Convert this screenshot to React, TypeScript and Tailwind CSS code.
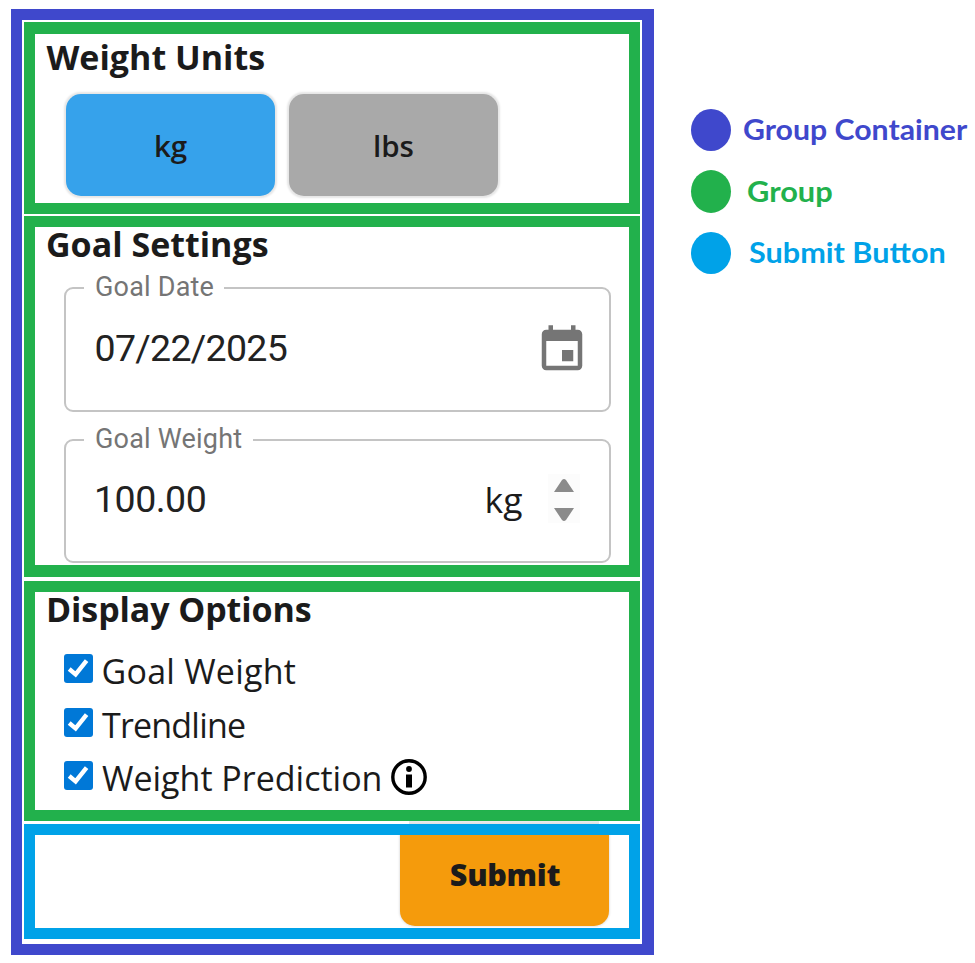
import type { ReactNode } from "react";

function Frame({ className, children }: { className: string; children?: ReactNode }) {
  return <section className={`bg-white ${className}`}>{children}</section>;
}

function UnitButton({ className, label }: { className: string; label: string }) {
  return (
    <button
      className={`h-[102px] w-[209px] rounded-[15px] text-[29.5px] leading-[103px] font-semibold shadow-[0_0_2px_1.5px_#e6e6e6] ${className}`}
    >
      {label}
    </button>
  );
}

function CheckRow({ label, labelClass, children }: { label: string; labelClass: string; children?: ReactNode }) {
  return (
    <label className="flex h-[53.5px] items-start">
      <span className="mt-[11px] flex size-[29px] shrink-0 rounded-[3px] bg-[#0078d7]">
        <svg viewBox="0 0 29 29" className="size-[29px]" fill="none" stroke="white" strokeWidth="4.4">
          <path d="M5.2 15 L11.6 20.4 L22.6 6.6" />
        </svg>
      </span>
      <span className={`text-[34px] leading-[56px] whitespace-nowrap ${labelClass}`}>{label}</span>
      {children}
    </label>
  );
}

function LegendRow({ dot, text, label }: { dot: string; text: string; label: string }) {
  return (
    <div className="flex items-center">
      <span className={`w-[40px] shrink-0 rounded-[50%] ${dot}`} />
      <span className={`origin-left text-[28px] leading-[40px] font-bold whitespace-nowrap ${text}`}>{label}</span>
    </div>
  );
}

export default function App() {
  return (
    <div className="flex h-[963px] w-[975px] items-start overflow-hidden bg-white pt-[9px] pl-[11px] font-['Open_Sans','Noto_Sans',sans-serif] text-[#1b1b1b]">
      <main className="flex h-[946px] w-[643px] shrink-0 flex-col border-[11px] border-r-[12px] border-[#3f48cc] bg-white pt-[2px] pl-[2px]">
        <Frame className="h-[192px] w-[616px] border-[11px] border-t-[12px] border-[#22b14c] pl-[12px]">
          <h2 className="-ml-[0.5px] h-[44px] text-[34px] leading-[46px] font-bold">Weight Units</h2>
          <div className="mt-[16px] ml-[19px] flex gap-[14px]">
            <UnitButton className="bg-[#36a2eb]" label="kg" />
            <UnitButton className="bg-[#a9a9a9]" label="lbs" />
          </div>
        </Frame>

        <Frame className="mt-[2px] h-[361px] w-[616px] border-[11px] border-b-[12px] border-[#22b14c] pl-[12px]">
          <h2 className="-ml-px h-[32px] text-[34px] leading-[34px] font-bold">Goal Settings</h2>
          <div className="relative mt-[28px] ml-[17px] flex h-[125px] w-[547px] rounded-[9px] border-2 border-[#c4c4c4] font-['Roboto',sans-serif]">
            <span className="absolute -top-[16px] left-[18px] w-[140px] bg-white pl-[11px] text-[27px] leading-[28px] tracking-[0.2px] whitespace-nowrap text-[#757575]">
              Goal Date
            </span>
            <span className="pl-[28.5px] text-[37.5px] leading-[118px] tracking-[-0.7px] text-[#222]">07/22/2025</span>
            <svg viewBox="0 0 24 24" className="mt-[33.5px] mr-[20px] ml-auto size-[54px]" fill="#757575">
              <path d="M17 12h-5v5h5v-5zM16 1v2H8V1H6v2H5c-1.11 0-1.99.9-1.99 2L3 19c0 1.1.89 2 2 2h14c1.1 0 2-.9 2-2V5c0-1.1-.9-2-2-2h-1V1h-2zm3 18H5V8h14v11z" />
            </svg>
          </div>
          <div className="relative mt-[27px] ml-[17px] flex h-[124px] w-[547px] rounded-[9px] border-2 border-[#c4c4c4] font-['Roboto',sans-serif]">
            <span className="absolute -top-[16px] left-[18px] w-[169px] bg-white pl-[11px] text-[27px] leading-[28px] tracking-[0.2px] whitespace-nowrap text-[#757575]">
              Goal Weight
            </span>
            <span className="pl-[28px] text-[37.5px] leading-[116px] tracking-[-0.5px] text-[#222]">100.00</span>
            <span className="mr-[25px] ml-auto font-['Open_Sans',sans-serif] text-[35.5px] leading-[117px]">kg</span>
            <span className="mt-[33px] mr-[29.5px] h-[49px] w-[32px] bg-[#fcfcfc]">
              <svg viewBox="0 0 32 49" className="h-[49px] w-[32px]" fill="#8b8b8b">
                <path d="M6 18 L14 6 Q16 4 18 6 L26 18 Z M6 34 L14 46 Q16 48 18 46 L26 34 Z" />
              </svg>
            </span>
          </div>
        </Frame>

        <Frame className="mt-[4px] h-[240px] w-[616px] border-[11px] border-[#22b14c] pl-[12px]">
          <h2 className="-ml-px h-[32px] text-[34px] leading-[34px] font-bold tracking-[-0.1px]">Display Options</h2>
          <div className="mt-[19px] ml-[17px]">
            <CheckRow label="Goal Weight" labelClass="ml-[8.5px] tracking-[0.25px]" />
            <CheckRow label="Trendline" labelClass="ml-[9px] tracking-[-0.8px]" />
            <CheckRow label="Weight Prediction" labelClass="ml-[9px]">
              <svg viewBox="0 0 36 36" className="mt-[9px] ml-[9px] size-[36px]">
                <circle cx="18" cy="18" r="16.2" fill="none" stroke="#000" strokeWidth="3.4" />
                <circle cx="18" cy="10" r="2.9" />
                <rect x="15" y="15.5" width="6" height="13" />
              </svg>
            </CheckRow>
          </div>
        </Frame>

        <div className="ml-[385px] h-[3px] w-[190px] shrink-0 bg-gradient-to-b from-[#ececec] to-[#e2e2e2]" />

        <Frame className="flex h-[115px] w-[616px] justify-end border-[11px] border-[#00a2e8] pr-[20px]">
          <button className="h-[91px] w-[209px] rounded-b-[15px] bg-[#f59b0c] text-[30.5px] font-extrabold tracking-[-0.3px] shadow-[0_0_2px_1px_#e6e6e6] [clip-path:inset(0_-4px_-2px_-4px)]">
            <span className="block h-[91px] pl-px leading-[79px]">Submit</span>
          </button>
        </Frame>
      </main>

      <aside className="mt-[100px] ml-[37px] flex flex-col gap-[19px] font-['Lato',sans-serif]">
        <LegendRow dot="h-[42px] bg-[#3f48cc]" text="mb-[2px] ml-[12px] scale-x-[1.08] text-[#3f48cc]" label="Group Container" />
        <LegendRow dot="h-[43px] bg-[#22b14c]" text="mb-px ml-[16px] scale-x-[1.1] text-[#22b14c]" label="Group" />
        <LegendRow dot="h-[42px] bg-[#00a2e8]" text="mb-[2px] ml-[17.5px] scale-x-[1.093] text-[#00a2e8]" label="Submit Button" />
      </aside>
    </div>
  );
}
